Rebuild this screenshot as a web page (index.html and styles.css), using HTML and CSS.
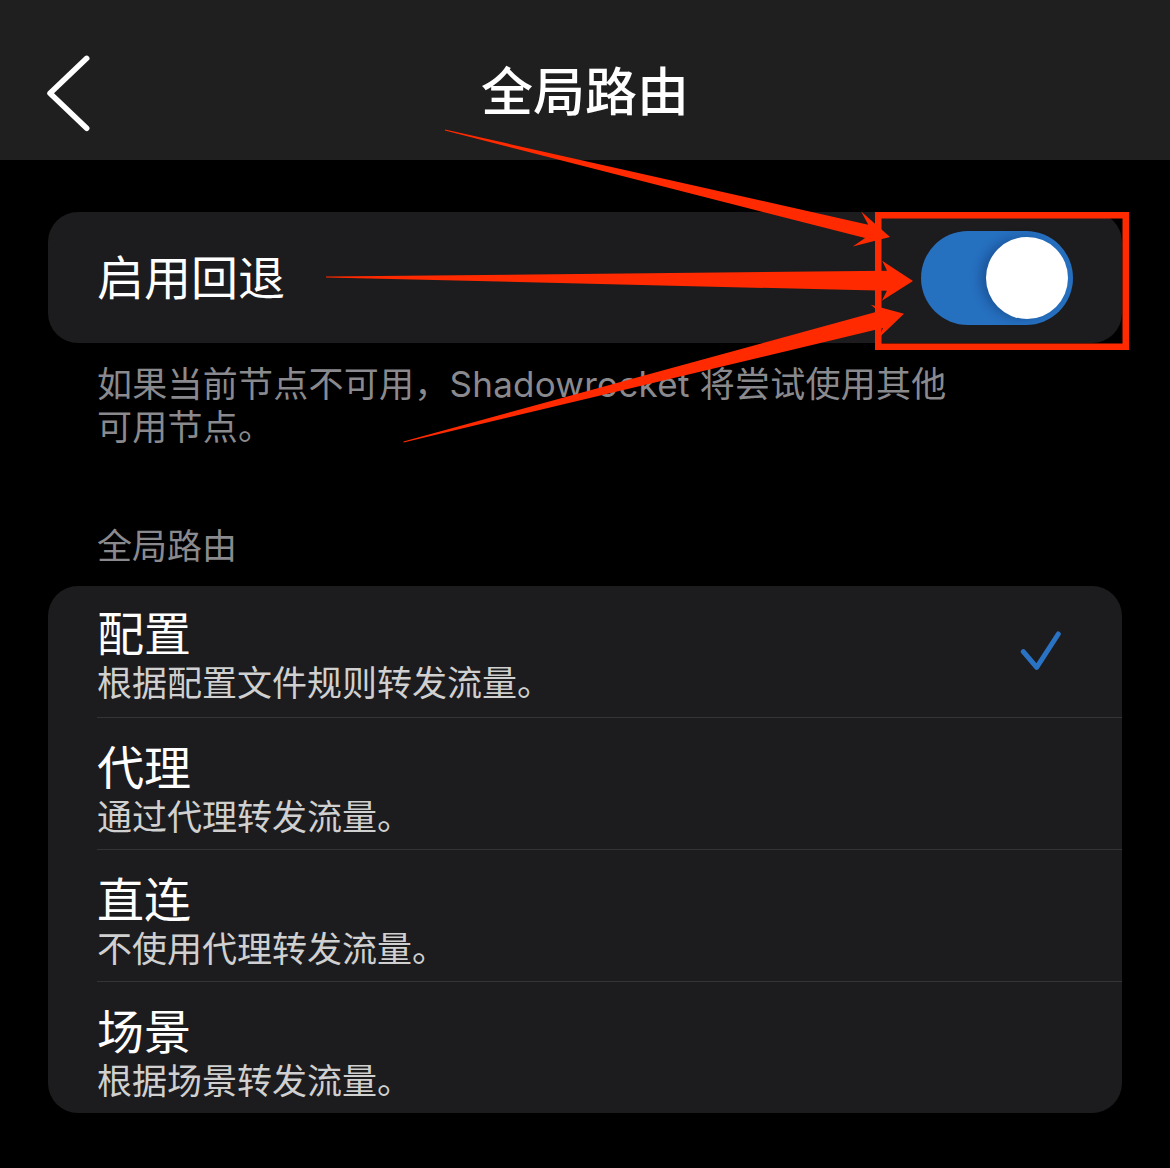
FILE: index.html
```html
<!DOCTYPE html>
<html lang="zh-CN">
<head>
<meta charset="utf-8">
<title>全局路由</title>
<link rel="stylesheet" href="styles.css">
</head>
<body>
<div class="page">
  <header class="navbar">
    <div class="nav-left">
      <svg class="back" width="50" height="80" viewBox="0 0 50 80">
        <polyline points="42.7,5.3 6,40.3 42.7,75.3" fill="none" stroke="#fff" stroke-width="5.5" stroke-linecap="round" stroke-linejoin="round"/>
      </svg>
    </div>
    <h1 class="nav-title">全局路由</h1>
    <div class="nav-right"></div>
  </header>

  <main class="content">
    <section class="card card-toggle">
      <span class="cell-label">启用回退</span>
      <div class="switch"><div class="knob"></div></div>
    </section>
    <p class="footnote">如果当前节点不可用，Shadowrocket 将尝试使用其他<br>可用节点。</p>

    <h2 class="section-title">全局路由</h2>
    <section class="card list">
      <div class="row">
        <div class="row-text">
          <div class="row-title">配置</div>
          <div class="row-sub">根据配置文件规则转发流量。</div>
        </div>
        <svg class="check" width="50" height="50" viewBox="0 0 50 50">
          <polyline points="3.3,25.7 16.7,41.3 38.3,8" fill="none" stroke="#2a73c4" stroke-width="5" stroke-linecap="round" stroke-linejoin="round"/>
        </svg>
      </div>
      <div class="row">
        <div class="row-text">
          <div class="row-title">代理</div>
          <div class="row-sub">通过代理转发流量。</div>
        </div>
      </div>
      <div class="row">
        <div class="row-text">
          <div class="row-title">直连</div>
          <div class="row-sub">不使用代理转发流量。</div>
        </div>
      </div>
      <div class="row">
        <div class="row-text">
          <div class="row-title">场景</div>
          <div class="row-sub">根据场景转发流量。</div>
        </div>
      </div>
    </section>
  </main>

  <svg class="annotations" width="1170" height="1168" viewBox="0 0 1170 1168">
    <g fill="#ff2a00">
      <polygon transform="translate(445 130) rotate(13.52)" points="0,-0.5 433.7,-6.8 423.7,-18 457.7,0 423.7,18 433.7,6.8 0,0.5"/>
      <polygon transform="translate(326 277) rotate(0.39)" points="0,-0.5 561,-10 556,-20 587,0 556,20 561,10 0,0.5"/>
      <polygon transform="translate(403.5 442) rotate(-14.38)" points="0,-0.5 492.7,-8.7 486.7,-17 516.7,0 486.7,17 492.7,8.7 0,0.5"/>
    </g>
    <rect x="878.25" y="215.25" width="247.5" height="131.5" fill="none" stroke="#ff2a00" stroke-width="6.5"/>
  </svg>
</div>
</body>
</html>
```

FILE: styles.css
```css
* {
  box-sizing: border-box;
}

html, body {
  margin: 0;
  padding: 0;
  background: #000;
}

body {
  font-family: "Inter", "Noto Sans CJK SC", "Noto Sans", sans-serif;
  color: #fff;
  width: 1170px;
  height: 1168px;
  overflow: hidden;
}

.page {
  position: relative;
  width: 1170px;
  height: 1168px;
}

.navbar {
  height: 160px;
  background: #1f1f1f;
  padding-top: 26px;
  display: grid;
  grid-template-columns: 1fr auto 1fr;
  align-items: center;
}

.nav-left {
  display: flex;
  align-items: center;
}

.back {
  display: block;
  margin-left: 44px;
}

.nav-title {
  margin: 0 0 9px;
  font-family: "Noto Sans CJK SC", sans-serif;
  font-size: 52px;
  font-weight: 500;
  line-height: 70px;
  letter-spacing: 0;
}

.content {
  padding: 52px 48px 0;
}

.card {
  background: #1c1c1e;
  border-radius: 30px;
}

.card-toggle {
  height: 131px;
  display: flex;
  align-items: center;
  justify-content: space-between;
  padding: 0 49px;
}

.cell-label {
  font-family: "Noto Sans CJK SC", sans-serif;
  font-size: 47px;
  line-height: 60px;
  padding-bottom: 6px;
}

.switch {
  width: 152px;
  height: 94px;
  border-radius: 47px;
  background: #2670c0;
  display: flex;
  align-items: center;
  justify-content: flex-end;
  padding: 0 5px;
}

.knob {
  width: 82px;
  height: 82px;
  border-radius: 50%;
  background: #fff;
  box-shadow: -6px 0 10px rgba(10, 40, 90, 0.35);
}

.footnote {
  margin: 20px 0 0;
  padding-left: 49px;
  font-size: 35px;
  line-height: 43px;
  letter-spacing: 0.25px;
  color: #8a8a8e;
}

.section-title {
  margin: 73px 0 0;
  padding-left: 49px;
  font-family: "Noto Sans CJK SC", sans-serif;
  font-size: 35px;
  font-weight: 400;
  line-height: 43px;
  color: #8a8a8e;
}

.list {
  margin-top: 21px;
  overflow: hidden;
}

.row {
  height: 132px;
  margin-left: 49px;
  padding: 22px 49px 0 0;
  border-top: 1px solid #343436;
  display: flex;
  align-items: flex-start;
  justify-content: space-between;
}

.row:first-child {
  height: 131px;
  border-top: none;
  padding-top: 20px;
}

.row-title {
  font-family: "Noto Sans CJK SC", sans-serif;
  font-size: 47px;
  line-height: 50px;
  color: #fff;
}

.row-sub {
  margin-top: 1px;
  font-family: "Noto Sans CJK SC", sans-serif;
  font-size: 35px;
  line-height: 48px;
  color: #d0d0d0;
}

.check {
  display: block;
  margin-top: 20px;
  margin-right: 3px;
}

.annotations {
  position: absolute;
  left: 0;
  top: 0;
  pointer-events: none;
}
```
